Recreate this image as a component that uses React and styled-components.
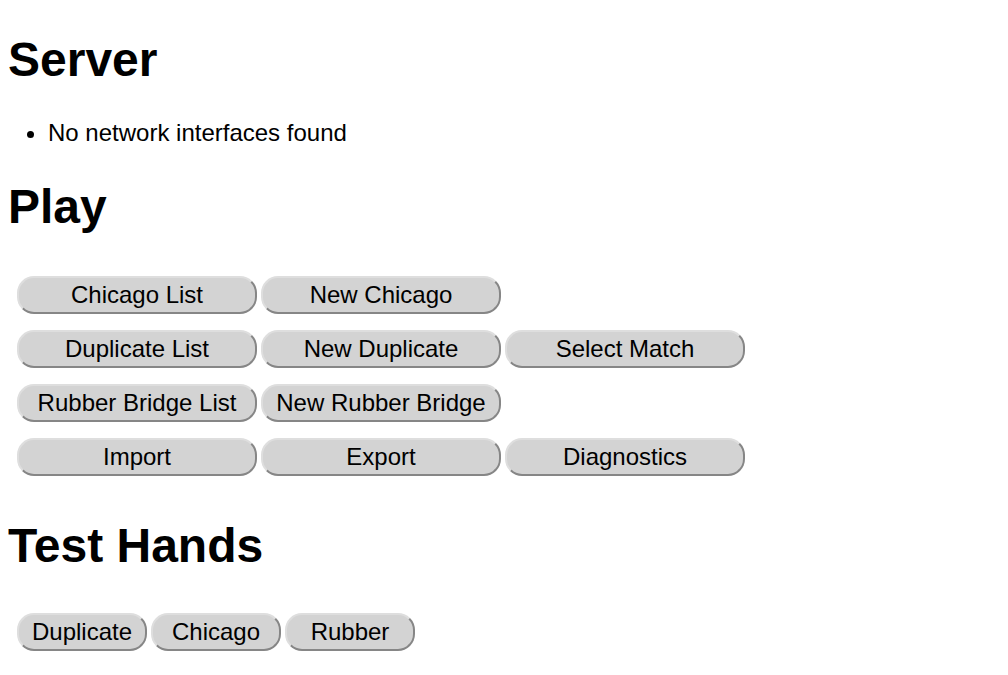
import React from 'react';
import styled, { createGlobalStyle } from 'styled-components';

const PLAY_ROWS = [
  ['Chicago List', 'New Chicago'],
  ['Duplicate List', 'New Duplicate', 'Select Match'],
  ['Rubber Bridge List', 'New Rubber Bridge'],
  ['Import', 'Export', 'Diagnostics'],
];

const TEST_HANDS = ['Duplicate', 'Chicago', 'Rubber'];

function App() {
  return (
    <Page>
      <GlobalStyle />
      <Heading>Server</Heading>
      <List>
        <li>No network interfaces found</li>
      </List>

      <Heading>Play</Heading>
      <ButtonBox>
        {PLAY_ROWS.map((row, index) => (
          <ButtonRow key={index}>
            {row.map(label => (
              <PillButton key={label} width="240px">
                {label}
              </PillButton>
            ))}
          </ButtonRow>
        ))}
      </ButtonBox>

      <Heading>Test Hands</Heading>
      <ButtonBox top="8px">
        <ButtonRow>
          {TEST_HANDS.map(label => (
            <PillButton key={label} width="130px">
              {label}
            </PillButton>
          ))}
        </ButtonRow>
      </ButtonBox>
    </Page>
  );
}

const GlobalStyle = createGlobalStyle`
  body {
    margin: 0 8px 8px;
    background: white;
    color: black;
    font-family: "Liberation Sans", Arial, sans-serif;
    font-size: 24px;
  }
`;

const Page = styled.div`
  padding-bottom: 286px;
`;

const Heading = styled.h1`
  margin: 32px 0;
  font-size: 48px;
  font-weight: bold;
`;

const List = styled.ul`
  margin: 24px 0;
  padding-left: 40px;
`;

const ButtonBox = styled.div`
  display: flex;
  flex-direction: column;
  gap: 16px;
  padding: ${props => props.top || '10px'} 7px 10px;
`;

const ButtonRow = styled.div`
  display: flex;
`;

const PillButton = styled.button`
  width: ${props => props.width};
  margin: 0 2px;
  padding: 3px 0;
  border-width: 2px;
  border-style: solid;
  border-color: #dedede #868686 #868686 #dedede;
  border-radius: 17px;
  background-color: #d3d3d3;
  color: black;
  font-family: "Liberation Sans", Arial, sans-serif;
  font-size: 24px;
  line-height: normal;
  text-align: center;
  cursor: pointer;
`;

export default App;
